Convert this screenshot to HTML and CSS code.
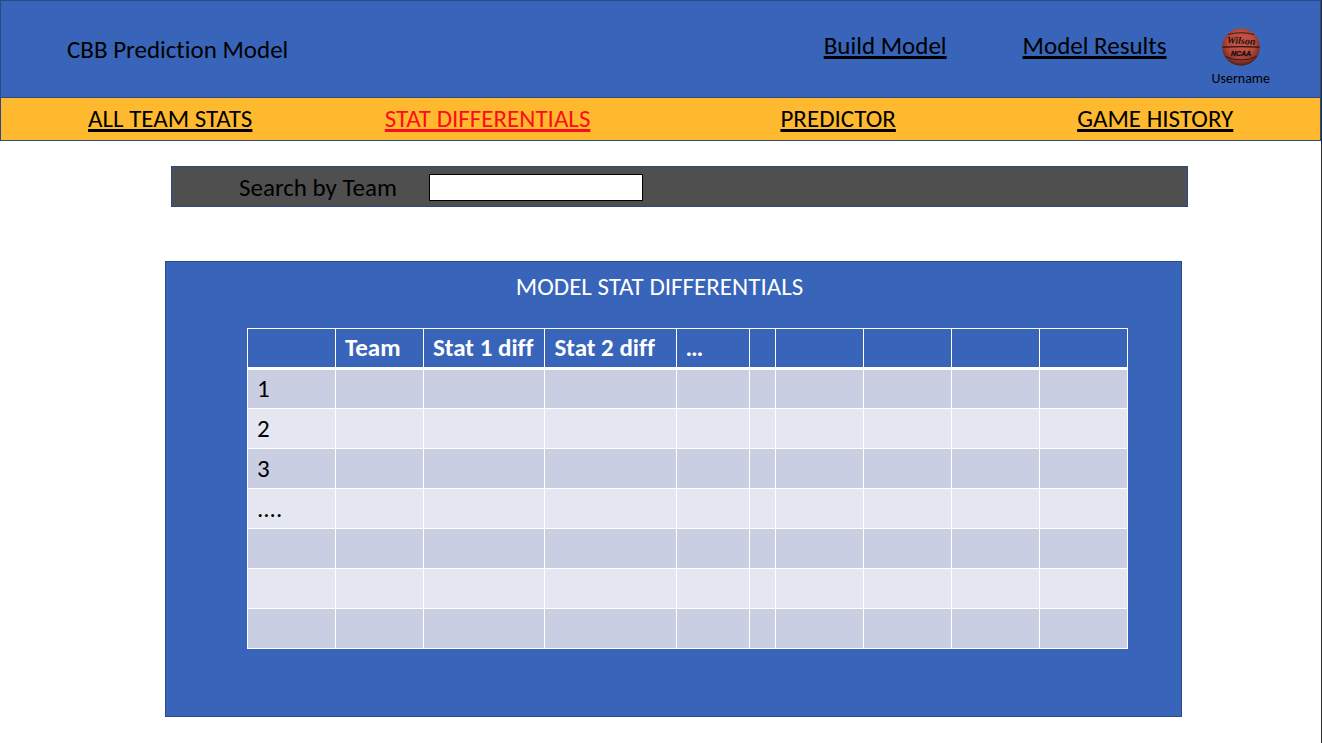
FILE: index.html
```html
<!DOCTYPE html>
<html lang="en">
<head>
<meta charset="utf-8">
<title>CBB Prediction Model</title>
<link rel="stylesheet" href="styles.css">
</head>
<body>
<header class="header">
  <div class="brand">CBB Prediction Model</div>
  <nav class="actions" aria-label="Model">
    <a href="#build">Build Model</a>
    <a href="#results">Model Results</a>
  </nav>
  <div class="user">
    <svg class="ball" viewBox="0 0 38 38" aria-hidden="true">
      <defs>
        <radialGradient id="leather" cx="50%" cy="40%" r="58%">
          <stop offset="0" stop-color="#cc5748"/>
          <stop offset="0.6" stop-color="#b84a3e"/>
          <stop offset="0.85" stop-color="#8d342b"/>
          <stop offset="1" stop-color="#542019"/>
        </radialGradient>
      </defs>
      <circle cx="19" cy="19" r="18.8" fill="url(#leather)"/>
      <g fill="none" stroke="#2b1512" stroke-width="0.9">
        <path d="M0.3 19.2Q19 18 37.7 19.2" stroke-width="1.3"/>
        <path d="M6 6.500Q19 3 32 6.500"/>
        <path d="M3.500 28.500Q19 35.500 34.500 28.500"/>
      </g>
      <text class="ball-script" x="19" y="16" text-anchor="middle" transform="rotate(3 19 15)">Wilson</text>
      <text class="ball-block" x="19" y="27.500" text-anchor="middle">NCAA</text>
    </svg>
    <span class="username">Username</span>
  </div>
</header>
<nav class="tabs" aria-label="Sections">
  <a href="#teams">ALL TEAM STATS</a>
  <a href="#differentials" class="active" aria-current="page">STAT DIFFERENTIALS</a>
  <a href="#predictor">PREDICTOR</a>
  <a href="#history">GAME HISTORY</a>
</nav>
<main class="content">
  <form class="search">
    <label for="team">Search by Team</label>
    <input id="team" type="text">
  </form>
  <section class="panel">
    <h1 class="panel-title">MODEL STAT DIFFERENTIALS</h1>
    <table class="stats">
      <colgroup>
        <col class="col-std"><col class="col-std"><col class="col-stat1"><col class="col-stat2"><col class="col-more"><col class="col-thin"><col class="col-std"><col class="col-std"><col class="col-std"><col class="col-std">
      </colgroup>
      <thead>
        <tr><th></th><th>Team</th><th>Stat 1 diff</th><th>Stat 2 diff</th><th>…</th><th></th><th></th><th></th><th></th><th></th></tr>
      </thead>
      <tbody>
        <tr><td>1</td><td></td><td></td><td></td><td></td><td></td><td></td><td></td><td></td><td></td></tr>
        <tr><td>2</td><td></td><td></td><td></td><td></td><td></td><td></td><td></td><td></td><td></td></tr>
        <tr><td>3</td><td></td><td></td><td></td><td></td><td></td><td></td><td></td><td></td><td></td></tr>
        <tr><td>....</td><td></td><td></td><td></td><td></td><td></td><td></td><td></td><td></td><td></td></tr>
        <tr><td></td><td></td><td></td><td></td><td></td><td></td><td></td><td></td><td></td><td></td></tr>
        <tr><td></td><td></td><td></td><td></td><td></td><td></td><td></td><td></td><td></td><td></td></tr>
        <tr><td></td><td></td><td></td><td></td><td></td><td></td><td></td><td></td><td></td><td></td></tr>
      </tbody>
    </table>
  </section>
</main>
</body>
</html>
```
FILE: styles.css
```css
* { box-sizing: border-box; }

body {
  margin: 0;
  min-height: 100vh;
  border-right: 1px solid #2b2b2b;
  background: #fff;
  color: #000;
  font: 25px/28px Carlito, Calibri, Lato, sans-serif;
  font-variant-ligatures: none;
}

a {
  color: inherit;
  text-decoration: underline;
  text-decoration-thickness: 3px;
  text-underline-offset: 2px;
  text-decoration-skip-ink: none;
}

.header {
  display: flex;
  align-items: flex-start;
  min-height: 97px;
  padding: 27px 50px 8px 66px;
  border: 1px solid #2a4a85;
  border-bottom: 0;
  background: #3865b9;
}

.brand { margin-right: auto; padding-top: 8px; }

.actions { display: flex; gap: 76px; padding-top: 4px; }

.user {
  display: flex;
  flex-direction: column;
  align-items: center;
  gap: 5px;
  margin-left: 45px;
}

.ball { width: 38px; height: 38px; }

.ball-script {
  font: italic bold 10px "Liberation Serif", serif;
  fill: #1c100e;
}

.ball-block {
  font: italic bold 7px "Liberation Sans", sans-serif;
  fill: #1c100e;
  stroke: #1c100e;
  stroke-width: 0.4;
}

.username { font-size: 14px; line-height: 16px; }

.tabs {
  display: grid;
  grid-template-columns: 297fr 396fr 297fr 243fr;
  align-items: center;
  min-height: 44px;
  padding-left: 87px;
  border: 1px solid #2a4a85;
  background: #ffb92e;
}

.tabs a { justify-self: start; }
.tabs .active { color: #fc0d1b; }

.content { padding: 25px 133px 26px 165px; }

.search {
  display: flex;
  align-items: center;
  gap: 32px;
  min-height: 41px;
  margin: 0 0 54px 6px;
  padding: 2px 67px 0;
  border: 1px solid #2a4a85;
  background: #4f4f4f;
}

.search input {
  width: 214px;
  height: 27px;
  padding: 0 8px;
  border: 1px solid #000;
  border-radius: 0;
  background: #fff;
  font: inherit;
}

.panel {
  margin-right: 6px;
  padding: 11px 53px 67px 81px;
  border: 1px solid #2a4a85;
  background: #3865b9;
}

.panel-title {
  margin: 0 28px 27px 0;
  padding-right: 28px;
  color: #fff;
  font-size: 25px;
  font-weight: 400;
  line-height: 28px;
  text-align: center;
}

.stats {
  width: 100%;
  table-layout: fixed;
  border-collapse: collapse;
}

.col-std { width: 10%; }
.col-stat1 { width: 13.8%; }
.col-stat2 { width: 14.9%; }
.col-more { width: 8.4%; }
.col-thin { width: 2.9%; }

.stats th,
.stats td {
  height: 40px;
  padding: 0 9px;
  border: 1px solid #fff;
  text-align: left;
  white-space: nowrap;
}

.stats th { color: #fff; font-weight: 700; border-bottom-width: 3px; }
.stats td { background: #e4e7f2; }
.stats tbody tr:nth-child(odd) td { background: #c9cee3; }
```
